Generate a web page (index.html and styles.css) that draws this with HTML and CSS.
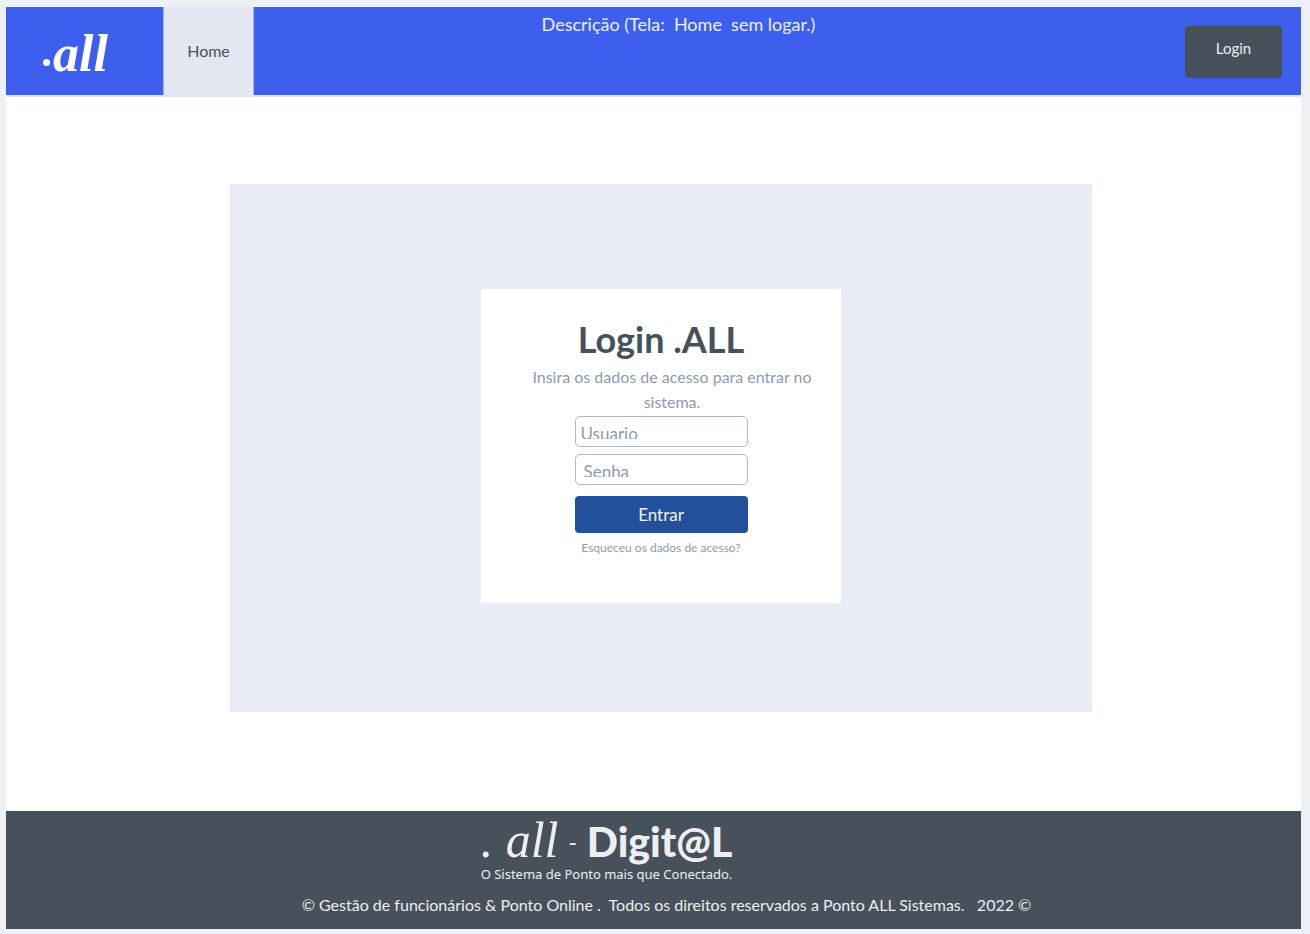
FILE: index.html
```html
<!DOCTYPE html>
<html lang="pt-BR">
<head>
<meta charset="utf-8">
<meta name="viewport" content="width=device-width, initial-scale=1">
<title>Login .ALL</title>
<link rel="stylesheet" href="styles.css">
</head>
<body>
<div class="page">
  <header class="header">
    <div class="logo"><span class="logo-dot"></span><span>all</span></div>
    <nav class="nav"><a class="nav-link" href="#">Home</a></nav>
    <p class="description">Descrição (Tela:&nbsp; Home&nbsp; sem logar.)</p>
    <button class="login-button" type="button">Login</button>
  </header>
  <main class="main">
    <section class="panel">
      <form class="card">
        <h1 class="title">Login .ALL</h1>
        <p class="subtitle">Insira os dados de acesso para entrar no sistema.</p>
        <div class="fields">
          <div class="field"><div class="field-view"><input class="input" type="text" placeholder="Usuario" aria-label="Usuario"></div></div>
          <div class="field field-password"><div class="field-view"><input class="input" type="password" placeholder="Senha" aria-label="Senha"></div></div>
          <button class="submit" type="button">Entrar</button>
        </div>
        <a class="forgot" href="#">Esqueceu os dados de acesso?</a>
      </form>
    </section>
  </main>
  <footer class="footer">
    <div class="brand">
      <div class="brand-row"><span class="brand-script">. all</span><span class="brand-dash">-</span><span class="brand-name">Digit@L</span></div>
      <p class="slogan">O Sistema de Ponto mais que Conectado.</p>
    </div>
    <p class="copyright">© Gestão de funcionários &amp; Ponto Online .&nbsp; Todos os direitos reservados a Ponto ALL Sistemas. &nbsp; 2022 ©</p>
  </footer>
</div>
</body>
</html>
```

FILE: styles.css
```css
* { box-sizing: border-box; }
body {
  margin: 0;
  padding: 7px 9px 5px 6px;
  min-height: 100vh;
  display: flex;
  background: #edf1f6;
  color: #47515b;
  font-family: Lato, "Liberation Sans", sans-serif;
}
p, h1 { margin: 0; font-weight: 400; }
a { color: inherit; text-decoration: none; }
button { border: 0; font: inherit; cursor: pointer; }
.page { flex: 1; display: flex; flex-direction: column; background: #fff; }

.header {
  display: flex;
  height: 90px;
  background: #3e5fee;
  border-bottom: 2px solid #dfe4f5;
}
.logo {
  display: flex;
  align-items: center;
  gap: 3px;
  width: 157px;
  padding: 6px 0 0 37px;
  color: #fff;
  font: italic 700 52px/60px "Liberation Serif", serif;
}
.logo-dot { width: 7px; height: 7px; margin-top: 16px; border-radius: 50%; background: #fff; }
.nav { display: flex; }
.nav-link {
  display: flex;
  align-items: center;
  justify-content: center;
  width: 91px;
  padding-bottom: 2px;
  border: 1px solid #a5b4f0;
  border-width: 0 1px;
  background: #e4e7f2;
  font-size: 16px;
}
.description {
  flex: 1;
  padding: 5px 82px 0 0;
  color: #edf0fc;
  font-size: 18px;
  line-height: 24px;
  text-align: center;
}
.login-button {
  width: 97px;
  height: 52px;
  margin: 19px 19px 0 0;
  padding: 0 0 8px;
  border-radius: 4px;
  background: #47515b;
  color: #eceef0;
  font-size: 15px;
}

.main { flex: 1; display: flex; padding: 87px 15px 99px 30px; }
.panel {
  display: flex;
  align-items: center;
  justify-content: center;
  width: 100%;
  max-width: 862px;
  min-height: 528px;
  margin: 0 auto;
  padding-bottom: 4px;
  background: #e9ecf5;
}
.card {
  display: flex;
  flex-direction: column;
  align-items: center;
  width: 360px;
  min-height: 314px;
  padding-top: 26px;
  background: #fff;
}
.title { font-size: 36px; font-weight: 700; line-height: 49px; }
.subtitle {
  width: 100%;
  padding: 0 26px 0 48px;
  color: #8f9ab1;
  font-size: 16px;
  line-height: 25px;
  text-align: center;
}
.fields { display: flex; flex-direction: column; gap: 7px; width: 173px; margin-top: 2px; }
.field {
  height: 31px;
  padding: 3px 5px 7px;
  border: 1px solid #adb5c9;
  border-radius: 5px;
}
.field-password { padding-left: 8px; }
.field-view { height: 19px; overflow: hidden; }
.input {
  display: block;
  width: 100%;
  height: 28px;
  padding: 0;
  border: 0;
  outline: 0;
  background: transparent;
  color: #47515b;
  font: 17px/28px Lato, "Liberation Sans", sans-serif;
}
.input::placeholder { color: #8f9ab1; opacity: 1; }
.submit {
  height: 37px;
  margin-top: 4px;
  border-radius: 4px;
  background: #23509b;
  color: #f0f3f9;
  font-size: 17px;
}
.forgot { margin-top: 6px; color: #8f9ab1; font-size: 12px; line-height: 18px; }

.footer {
  display: flex;
  flex-direction: column;
  align-items: center;
  min-height: 118px;
  padding-top: 8px;
  background: #47515b;
  color: #edeef0;
}
.brand { margin-right: 94px; }
.brand-row { display: flex; align-items: baseline; justify-content: space-between; height: 46px; line-height: 42px; }
.brand-script { font: italic 400 50px/42px "Liberation Serif", serif; }
.brand-dash { align-self: center; font-size: 24px; }
.brand-name { font-size: 41px; font-weight: 900; }
.slogan { font: 13px/18px "Noto Sans", "Open Sans", sans-serif; }
.copyright { margin-top: 10px; padding-left: 26px; font-size: 16px; line-height: 24px; text-align: center; }
```
